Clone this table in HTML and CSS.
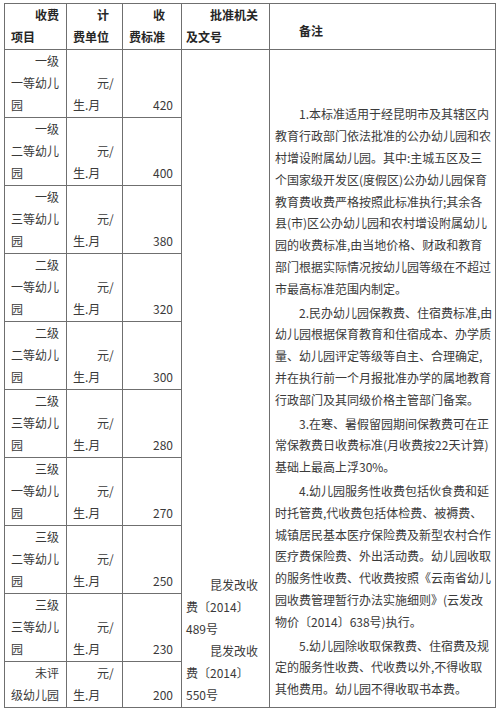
FILE: index.html
```html
<!DOCTYPE html>
<html lang="zh-CN">
<head>
<meta charset="utf-8">
<title>幼儿园收费标准</title>
<link rel="stylesheet" href="styles.css">
</head>
<body>
<table class="fee-table">
  <colgroup>
    <col class="col-item">
    <col class="col-unit">
    <col class="col-price">
    <col class="col-approval">
    <col class="col-notes">
  </colgroup>
  <thead>
    <tr>
      <th>收费项目</th>
      <th>计费单位</th>
      <th>收费标准</th>
      <th class="approval">批准机关及文号</th>
      <th class="notes">备注</th>
    </tr>
  </thead>
  <tbody>
    <tr>
      <td>一级一等幼儿园</td>
      <td>元/生.月</td>
      <td>420</td>
      <td rowspan="10" class="approval">
        <p>昆发改收费〔2014〕489号</p>
        <p>昆发改收费〔2014〕550号</p>
      </td>
      <td rowspan="10" class="notes">
        <p>1.本标准适用于经昆明市及其辖区内<br>教育行政部门依法批准的公办幼儿园和农<br>村增设附属幼儿园。其中:主城五区及三<br>个国家级开发区(度假区)公办幼儿园保育<br>教育费收费严格按照此标准执行;其余各<br>县(市)区公办幼儿园和农村增设附属幼儿<br>园的收费标准,由当地价格、财政和教育<br>部门根据实际情况按幼儿园等级在不超过<br>市最高标准范围内制定。</p>
        <p>2.民办幼儿园保教费、住宿费标准,由<br>幼儿园根据保育教育和住宿成本、办学质<br>量、幼儿园评定等级等自主、合理确定,<br>并在执行前一个月报批准办学的属地教育<br>行政部门及其同级价格主管部门备案。</p>
        <p>3.在寒、暑假留园期间保教费可在正<br>常保教费日收费标准(月收费按22天计算)<br>基础上最高上浮30%。</p>
        <p>4.幼儿园服务性收费包括伙食费和延<br>时托管费,代收费包括体检费、被褥费、<br>城镇居民基本医疗保险费及新型农村合作<br>医疗费保险费、外出活动费。幼儿园收取<br>的服务性收费、代收费按照《云南省幼儿<br>园收费管理暂行办法实施细则》(云发改<br>物价〔2014〕638号)执行。</p>
        <p>5.幼儿园除收取保教费、住宿费及规<br>定的服务性收费、代收费以外,不得收取<br>其他费用。幼儿园不得收取书本费。</p>
      </td>
    </tr>
    <tr><td>一级二等幼儿园</td><td>元/生.月</td><td>400</td></tr>
    <tr><td>一级三等幼儿园</td><td>元/生.月</td><td>380</td></tr>
    <tr><td>二级一等幼儿园</td><td>元/生.月</td><td>320</td></tr>
    <tr><td>二级二等幼儿园</td><td>元/生.月</td><td>300</td></tr>
    <tr><td>二级三等幼儿园</td><td>元/生.月</td><td>280</td></tr>
    <tr><td>三级一等幼儿园</td><td>元/生.月</td><td>270</td></tr>
    <tr><td>三级二等幼儿园</td><td>元/生.月</td><td>250</td></tr>
    <tr><td>三级三等幼儿园</td><td>元/生.月</td><td>230</td></tr>
    <tr><td>未评级幼儿园</td><td>元/生.月</td><td>200</td></tr>
  </tbody>
</table>
</body>
</html>
```

FILE: styles.css
```css
html, body {
  margin: 0;
  padding: 0;
  background: #ffffff;
}

body {
  font-family: "Noto Sans CJK SC", "Noto Sans", sans-serif;
  font-size: 12px;
  line-height: 22px;
  color: #3a3a3a;
}

.fee-table {
  margin: 3px 0 0 4px;
  width: 491px;
  table-layout: fixed;
  border-collapse: collapse;
}

.col-item { width: 62px; }
.col-unit { width: 56px; }
.col-price { width: 59px; }
.col-approval { width: 88px; }
.col-notes { width: 226px; }

.fee-table th,
.fee-table td {
  border: 1px solid #6f6f6f;
  padding: 0 6px 1px 6px;
  vertical-align: bottom;
  text-align: left;
  text-indent: 2em;
  font-weight: normal;
}

.fee-table th {
  font-weight: bold;
  color: #262626;
}

.fee-table .approval {
  padding-left: 4px;
}

.fee-table .notes {
  padding: 0 2px 7px 5px;
}

.fee-table p {
  margin: 0;
}

.fee-table td.notes p {
  line-height: 21.8px;
}

.fee-table td.notes p + p {
  margin-top: 2px;
}
```
